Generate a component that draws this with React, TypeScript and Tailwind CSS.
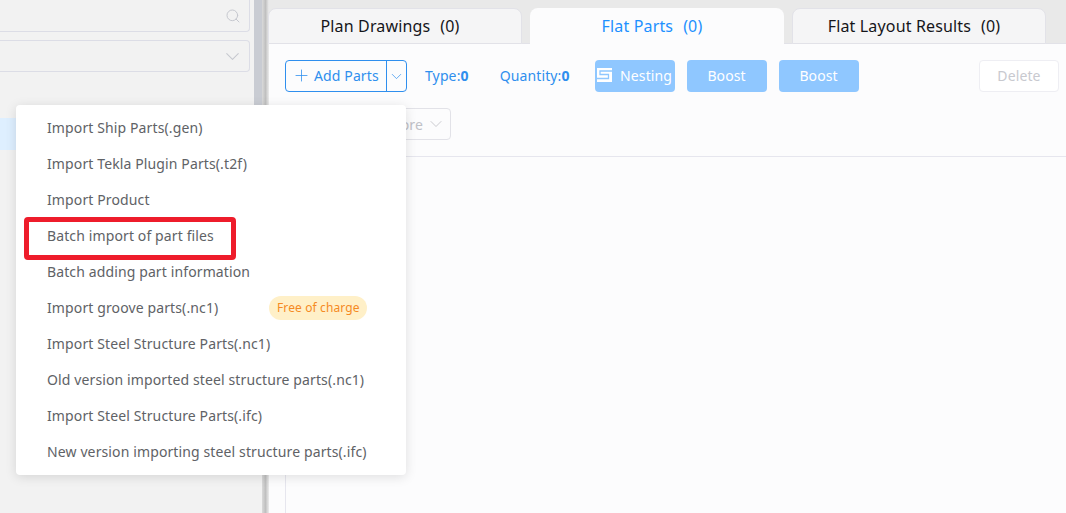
import { ChevronDown, Plus, Search } from "lucide-react";

const font = { fontFamily: '"Noto Sans", "Noto Sans CJK SC", sans-serif' };

const menuItems = [
  "Import Ship Parts(.gen)",
  "Import Tekla Plugin Parts(.t2f)",
  "Import Product",
  "Batch import of part files",
  "Batch adding part information",
  "Import groove parts(.nc1)",
  "Import Steel Structure Parts(.nc1)",
  "Old version imported steel structure parts(.nc1)",
  "Import Steel Structure Parts(.ifc)",
  "New version importing steel structure parts(.ifc)",
];

function NestingIcon() {
  return (
    <svg width="15" height="14" viewBox="0 0 15 14" fill="none" className="shrink-0">
      <rect width="15" height="14" fill="#ffffff" />
      <path d="M15 3H3V6.5H11.5V10.5H0" stroke="#8fc7ff" strokeWidth="1.3" />
    </svg>
  );
}

function Tab({ label, active }: { label: string; active?: boolean }) {
  return (
    <div
      className={
        active
          ? "-mb-px flex h-9 w-[254px] items-center justify-center gap-[10px] rounded-t-lg bg-[#fcfcfd] pr-[10px] text-[16px] tracking-[0.15px] text-[#1e90ff]"
          : "-mb-px flex h-9 w-[254px] items-center justify-center gap-[10px] rounded-t-lg border border-[#e2e2e8] bg-[#f5f5f6] pr-[10px] text-[16px] tracking-[0.15px] text-[#15151a]"
      }
    >
      <span>{label}</span>
      <span>(0)</span>
    </div>
  );
}

export default function App() {
  return (
    <div className="relative flex h-[513px] w-[1066px] overflow-hidden bg-[#f2f2f2] tracking-[0.12px]" style={font}>
      {/* Left panel */}
      <div className="flex w-[254px] shrink-0 flex-col pr-1">
        <div className="flex h-8 items-center justify-end rounded-br border border-l-0 border-t-0 border-[#dcdde6] pr-2 text-[#c6c8cf]">
          <Search size={16} strokeWidth={1.5} />
        </div>
        <div className="mt-2 flex h-8 items-center justify-end rounded-r border border-l-0 border-[#dcdde6] pr-[5px] text-[#c6c8cf]">
          <ChevronDown size={23} strokeWidth={1.1} />
        </div>
        <div className="-mr-1 mt-[46px] h-8 bg-[#deefff]" />
      </div>

      {/* Scrollbar thumb, ends behind the menu */}
      <div className="h-[300px] w-2 shrink-0 bg-[#c9ccd3]" />
      {/* Splitter */}
      <div className="w-[7px] shrink-0 bg-gradient-to-r from-[#dadada] via-[#c0c0c0] to-[#ececec]" />

      {/* Right panel */}
      <div className="flex min-w-0 flex-1 flex-col bg-[#e9e9e9]">
        <div className="-ml-px flex h-11 shrink-0 items-end gap-2 border-b border-[#e2e2e8]">
          <Tab label="Plan Drawings" />
          <Tab label="Flat Parts" active />
          <Tab label="Flat Layout Results" />
        </div>

        <div className="flex-1 bg-[#fcfcfd]">
          <div className="h-[113px] border-b border-[#e6e6ee] pl-4 pr-[7px] pt-4">
            <div className="flex h-8 items-center text-[14px]">
              <div className="flex h-8 w-[122px] items-stretch rounded border border-[#2f8fee] text-[#2f8fee]">
                <div className="flex w-[101px] items-center gap-[3px] border-r border-[#2f8fee] pb-[2px] pl-[6px]">
                  <Plus size={19} strokeWidth={1} />
                  <span>Add Parts</span>
                </div>
                <div className="flex flex-1 items-center justify-center">
                  <ChevronDown size={17} strokeWidth={1} />
                </div>
              </div>
              <span className="ml-[18px] pb-[2px] text-[#2f8fee]">
                Type:<b className="font-bold">0</b>
              </span>
              <span className="ml-[31px] pb-[2px] text-[#2f8fee]">
                Quantity:<b className="font-bold">0</b>
              </span>
              <div className="ml-[25px] flex h-8 w-20 items-center justify-center gap-2 rounded bg-[#8fc7ff] pb-[2px] text-white">
                <NestingIcon />
                <span>Nesting</span>
              </div>
              <div className="ml-3 flex h-8 w-20 items-center justify-center rounded bg-[#8fc7ff] pb-[2px] text-white">Boost</div>
              <div className="ml-3 flex h-8 w-20 items-center justify-center rounded bg-[#8fc7ff] pb-[2px] text-white">Boost</div>
              <div className="ml-auto flex h-8 w-20 items-center justify-center rounded border border-[#eeeef3] bg-white pb-[2px] text-[#c8c9cf]">
                Delete
              </div>
            </div>
            <div className="mt-4 flex h-8 w-[166px] items-center justify-end gap-[3px] rounded border border-[#e2e2e8] pr-1 text-[14px] text-[#c0c1c7]">
              <span>More</span>
              <ChevronDown size={20} strokeWidth={1} />
            </div>
          </div>
          <div className="ml-4 h-[360px] w-px bg-[#e6e6ee]" />
        </div>
      </div>

      {/* Dropdown menu */}
      <div className="absolute left-4 top-[105px] w-[390px] rounded bg-white pb-[6px] pt-1 shadow-[0_2px_12px_rgba(0,0,0,0.12)]">
        {menuItems.map((item) => (
          <div key={item} className="flex h-9 items-center pl-[31px] text-[14px] text-[#606266]">
            <span>{item}</span>
            {item === "Import groove parts(.nc1)" && (
              <span className="ml-[51px] mt-[2px] flex h-6 w-[98px] items-center justify-center rounded-full bg-[#fff0c8] text-[12px] text-[#f58a23]">
                Free of charge
              </span>
            )}
          </div>
        ))}
      </div>

      {/* Annotation box */}
      <div className="absolute left-6 top-[217px] h-[43px] w-[212px] rounded-sm border-[5px] border-[#ee1c2b]" />
    </div>
  );
}
